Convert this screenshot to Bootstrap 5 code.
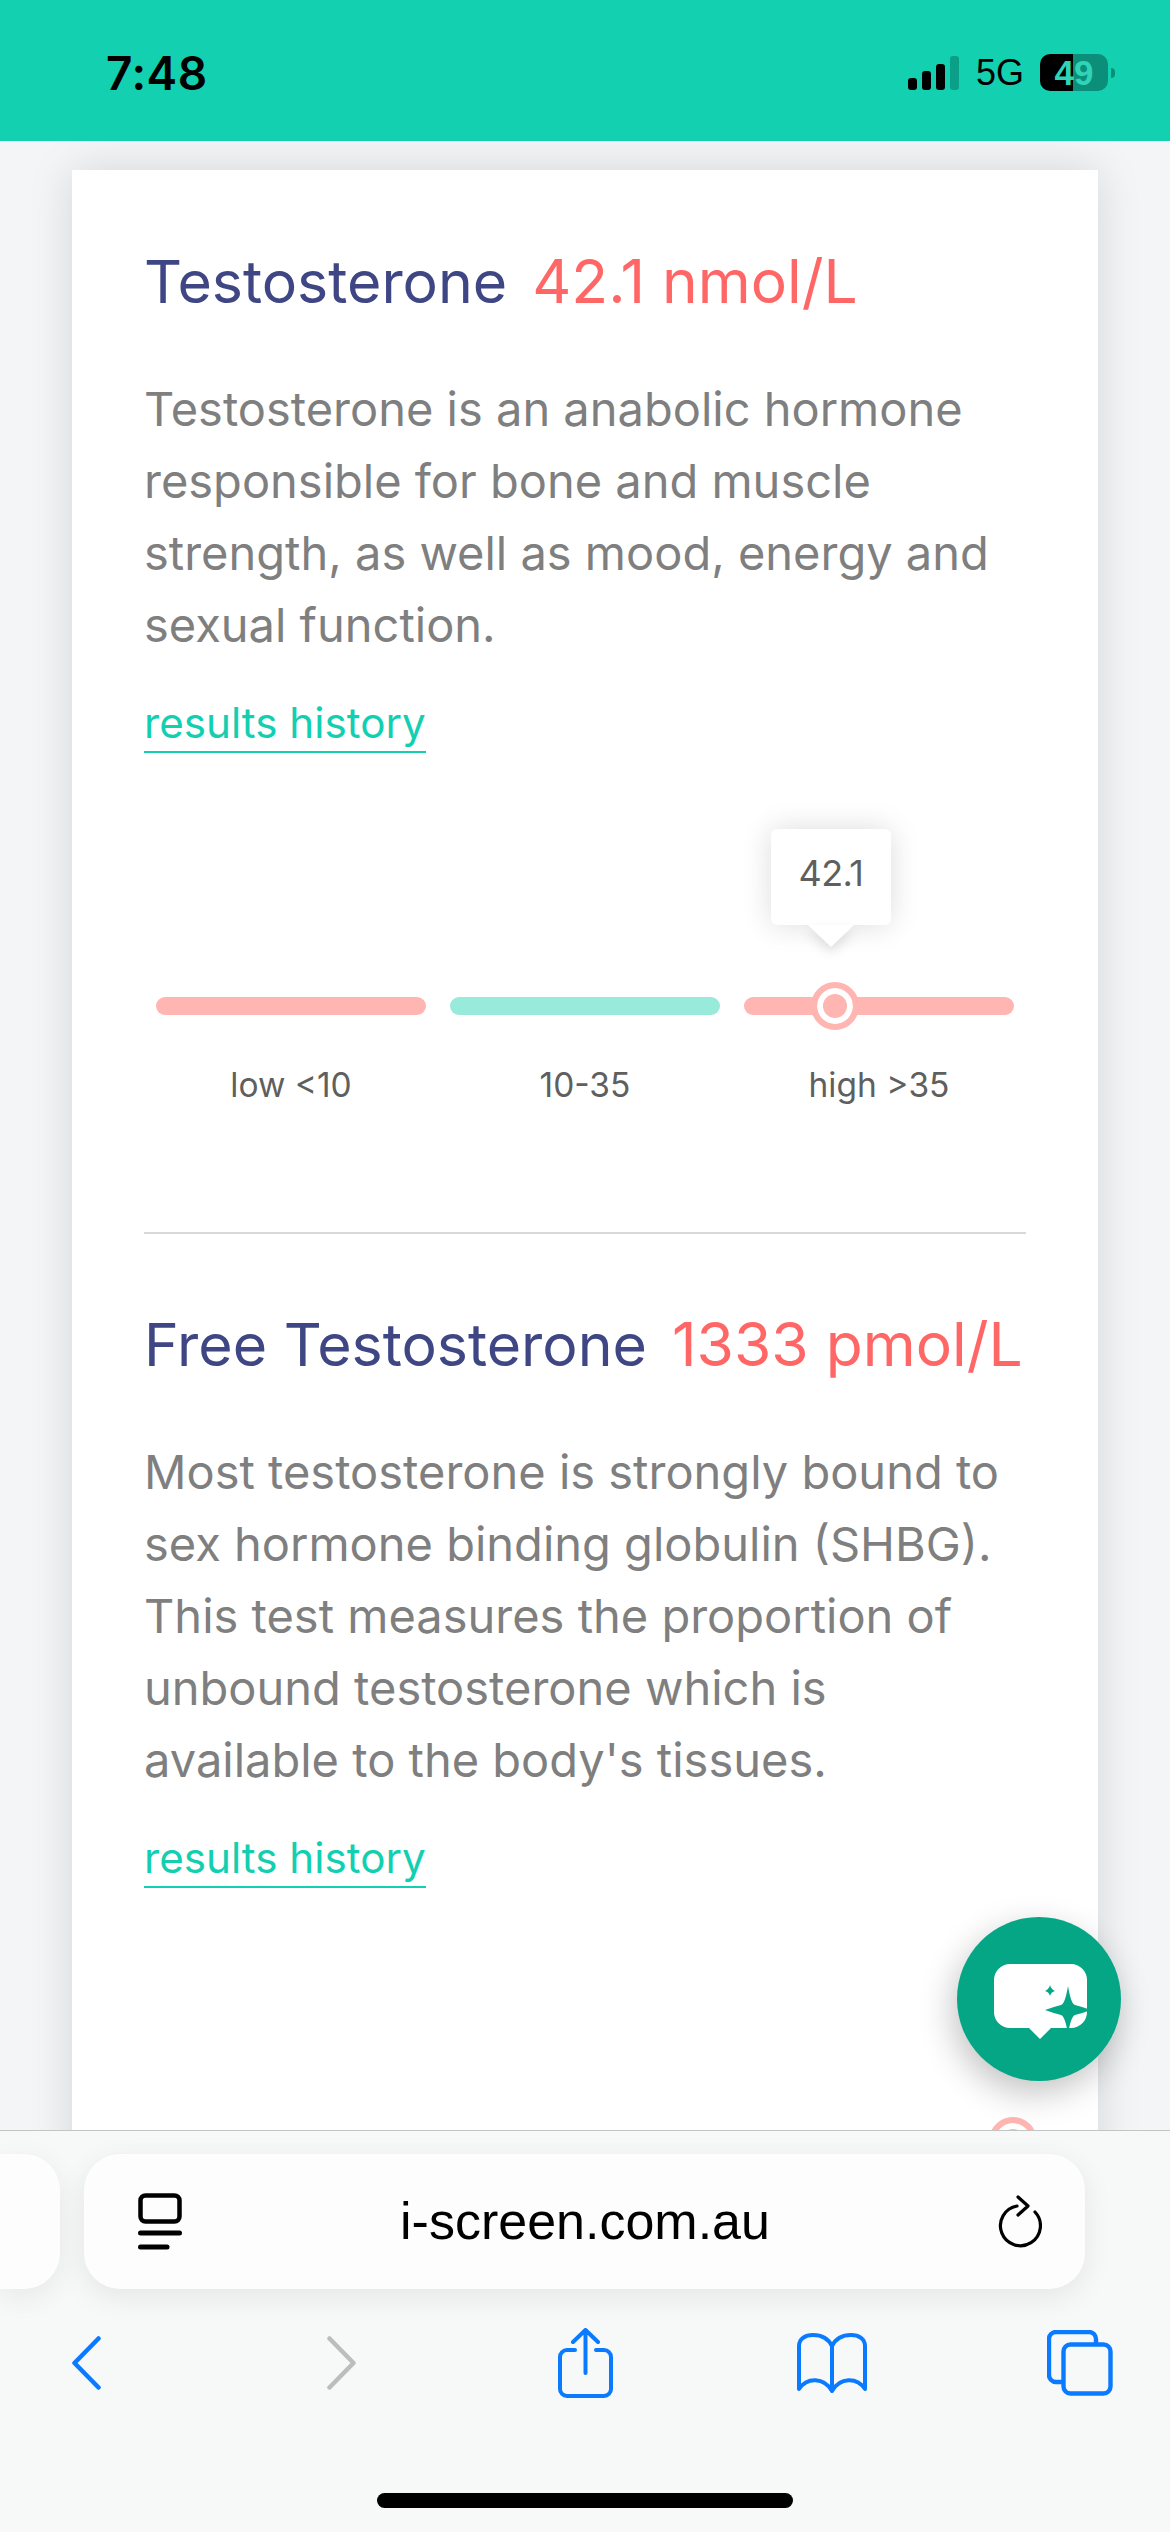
<!DOCTYPE html>
<html lang="en">
<head>
<meta charset="utf-8">
<title>i-screen results</title>
<link href="https://cdn.jsdelivr.net/npm/bootstrap@5.3.0/dist/css/bootstrap.min.css" rel="stylesheet">
<style>
html,body{height:2532px;overflow:hidden;background:#f3f5f7;font-family:Inter,"Liberation Sans",sans-serif}
.phone-page{width:1170px;height:2532px}
.status-top{height:141px;flex:none;background:#13d0b0;padding:4px 55px 0 106px;color:#000}
.clock-txt{font:600 46px/1 Inter,sans-serif;letter-spacing:.5px}
.net-txt{font:400 36px/1 "Liberation Sans",sans-serif;margin:0 16px 0 17px}
.batt-body{width:68px;height:37px;border-radius:10px;background:linear-gradient(to right,#000 48%,#0b8f7a 48%);color:#2fd3b7;font:700 35px/37px "Liberation Sans",sans-serif;text-align:center}
.batt-tip{width:4px;height:10px;background:#0b8f7a;border-radius:0 4px 4px 0;margin-left:3px}
.scroll-area{padding:29px 72px 0;min-height:0}
.result-card{border:0;border-radius:0;background:#fff;box-shadow:0 0 42px rgba(0,0,0,.13);padding:75px 72px 0 72px;min-height:2100px}
.res-title{line-height:72px;font-weight:400;margin:0 0 45px;white-space:nowrap}
.res-name{color:#3f4684;margin-right:25px;font-size:59px}
.res-val{color:#ff6767;font-size:60.5px}
.res-desc{font-size:47px;line-height:72px;color:#7f7f7f;margin:0}
.hist-link{display:inline-block;margin-top:33px;font-size:42.2px;line-height:57px;color:#13cfb1;text-decoration:none;border-bottom:2px solid #13cfb1}
.scale-row{margin-top:244px;padding:0 12px;gap:24px}
.scale-col{width:270px;position:relative}
.scale-bar{height:18px;border-radius:9px}
.bar-red{background:#ffb5b1}
.bar-green{background:#98eadb}
.scale-lbl{margin-top:45px;font-size:33.5px;line-height:50px;color:#5f5f5f;text-align:center}
.scale-dot{position:absolute;top:-15px;width:48px;height:48px;margin-left:-24px;border-radius:50%;background:#ffb5b1;border:6px solid #ffb5b1;box-shadow:inset 0 0 0 6px #fff}
.scale-tip{position:absolute;top:-168px;width:120px;height:96px;margin-left:-60px;background:#fff;border-radius:6px;box-shadow:0 0 30px rgba(0,0,0,.14);font-size:36px;line-height:88px;color:#5f5f5f;text-align:center;letter-spacing:-.5px}
.scale-tip::after{content:"";position:absolute;left:37px;top:96px;border:solid transparent;border-width:22px 23px 0;border-top-color:#fff;filter:drop-shadow(0 6px 6px rgba(0,0,0,.12))}
.sect-rule{margin:122px 0 74px;border:0;border-top:2px solid #d9d9d9;opacity:1}
.chat-fab{position:absolute;left:957px;top:1917px;width:164px;height:164px;border:0;padding:0;border-radius:50%;background:#05a685;box-shadow:-4px 12px 34px rgba(0,0,0,.24)}
.safari-bar{height:402px;flex:none;background:#f7f8f8;border-top:1px solid #c4c4c4;padding-top:23px;position:relative;z-index:2}
.tab-peek{width:60px;height:135px;background:#fdfdfd;border-radius:0 36px 36px 0;box-shadow:0 8px 30px rgba(0,0,0,.07)}
.url-pill{width:1001px;height:135px;margin-left:24px;background:#fdfdfd;border-radius:36px;padding:0 43px 0 54px;box-shadow:0 8px 30px rgba(0,0,0,.08)}
.url-txt{font:400 52px/1 "Liberation Sans",sans-serif;color:#000;margin:-1px 10px 0 0}
.tool-row{height:70px;margin-top:39px}
.tool-back{margin-left:72px}
.tool-fwd{margin-left:226px}
.tool-share{margin-left:202px}
.tool-book{margin-left:184px}
.tool-tabs{margin-left:180px}
.home-line{width:416px;height:15px;border-radius:8px;background:#000;margin:95px auto 0 377px}
</style>
</head>
<body>
<div class="phone-page d-flex flex-column position-relative">
  <header class="status-top d-flex align-items-center justify-content-between">
    <span class="clock-txt">7:48</span>
    <div class="d-flex align-items-center">
      <svg width="51" height="34" viewBox="0 0 51 34" aria-hidden="true">
        <rect x="0" y="22" width="9" height="12" rx="3"/>
        <rect x="14" y="15" width="9" height="19" rx="3"/>
        <rect x="28" y="8" width="9" height="26" rx="3"/>
        <rect x="42" y="0" width="9" height="34" rx="3" fill="#0b9f88"/>
      </svg>
      <span class="net-txt">5G</span>
      <span class="batt-body">49</span>
      <span class="batt-tip"></span>
    </div>
  </header>

  <main class="scroll-area flex-grow-1 overflow-hidden">
    <div class="card result-card">
      <h2 class="res-title"><span class="res-name">Testosterone</span><span class="res-val">42.1 nmol/L</span></h2>
      <p class="res-desc">Testosterone is an anabolic hormone responsible for bone and muscle strength, as well as mood, energy and sexual function.</p>
      <a href="#" class="hist-link align-self-start">results history</a>
      <div class="scale-row d-flex">
        <div class="scale-col"><div class="scale-bar bar-red"></div><div class="scale-lbl">low &lt;10</div></div>
        <div class="scale-col"><div class="scale-bar bar-green"></div><div class="scale-lbl">10-35</div></div>
        <div class="scale-col">
          <div class="scale-bar bar-red"></div>
          <div class="scale-tip" style="left:32.2%">42.1</div>
          <div class="scale-dot" style="left:33.7%"></div>
          <div class="scale-lbl">high &gt;35</div>
        </div>
      </div>
      <hr class="sect-rule">
      <h2 class="res-title"><span class="res-name">Free Testosterone</span><span class="res-val">1333 pmol/L</span></h2>
      <p class="res-desc">Most testosterone is strongly bound to sex hormone binding globulin (SHBG). This test measures the proportion of unbound testosterone which is available to the body's tissues.</p>
      <a href="#" class="hist-link align-self-start">results history</a>
      <div class="scale-row d-flex">
        <div class="scale-col"><div class="scale-bar bar-red"></div></div>
        <div class="scale-col"><div class="scale-bar bar-green"></div></div>
        <div class="scale-col">
          <div class="scale-bar bar-red"></div>
          <div class="scale-dot" style="left:99.8%"></div>
        </div>
      </div>
    </div>
  </main>

  <button class="chat-fab" type="button" aria-label="Chat">
    <svg width="164" height="164" viewBox="0 0 164 164" aria-hidden="true">
      <path fill="#fff" d="M53 47H114A16 16 0 0 1 130 63V95A16 16 0 0 1 114 111H94L83 122L72 111H53A16 16 0 0 1 37 95V63A16 16 0 0 1 53 47Z"/>
      <path fill="#05a685" d="M111 69Q114 87 118 88Q126 90 134 93Q126 96 118 98Q114 99 111 117Q108 99 104 98Q96 96 88 93Q96 90 104 88Q108 87 111 69Z"/>
      <path fill="#05a685" d="M93 68Q94 72 98 74Q94 75 93 79Q92 75 88 74Q92 72 93 68Z"/>
    </svg>
  </button>

  <footer class="safari-bar">
    <div class="d-flex">
      <div class="tab-peek"></div>
      <div class="url-pill d-flex align-items-center justify-content-between">
        <svg width="44" height="58" viewBox="0 0 44 58" fill="none" stroke="#000" stroke-width="4.5" stroke-linecap="round" aria-hidden="true">
          <rect x="2.5" y="2.5" width="39" height="26" rx="5"/>
          <path d="M2.5 40H41.5" stroke-width="5"/>
          <path d="M2.5 54H29" stroke-width="5"/>
        </svg>
        <span class="url-txt">i-screen.com.au</span>
        <svg width="44" height="54" viewBox="0 0 44 54" fill="none" stroke="#000" stroke-width="3.2" stroke-linecap="round" stroke-linejoin="round" aria-hidden="true">
          <path d="M19 11A20 20 0 1 0 37 17"/>
          <path d="M20 2L30 11L20 20"/>
        </svg>
      </div>
    </div>
    <div class="tool-row d-flex align-items-center">
      <svg class="tool-back" width="29" height="54" viewBox="0 0 29 54" fill="none" stroke="#0a7aff" stroke-width="4.5" stroke-linecap="round" stroke-linejoin="round" aria-hidden="true"><path d="M26.5 2.5L2.5 27L26.5 51.5"/></svg>
      <svg class="tool-fwd" width="29" height="54" viewBox="0 0 29 54" fill="none" stroke="#bdbdbd" stroke-width="4.5" stroke-linecap="round" stroke-linejoin="round" aria-hidden="true"><path d="M2.5 2.5L26.5 27L2.5 51.5"/></svg>
      <svg class="tool-share" width="55" height="70" viewBox="0 0 55 70" fill="none" stroke="#0a7aff" stroke-width="4" stroke-linecap="round" stroke-linejoin="round" aria-hidden="true">
        <path d="M17 22H9A7 7 0 0 0 2 29V61A7 7 0 0 0 9 68H46A7 7 0 0 0 53 61V29A7 7 0 0 0 46 22H38"/>
        <path d="M27.5 45V2M15 14L27.5 2L40 14"/>
      </svg>
      <svg class="tool-book" width="70" height="60" viewBox="0 0 70 60" fill="none" stroke="#0a7aff" stroke-width="4" stroke-linecap="round" stroke-linejoin="round" aria-hidden="true">
        <path d="M35 13C31 5 24 2 16 2C8 2 2 6 2 13V56C10 44 27 44 35 58C43 44 60 44 68 56V13C68 6 62 2 54 2C46 2 39 5 35 13V58"/>
      </svg>
      <svg class="tool-tabs" width="66" height="66" viewBox="0 0 66 66" fill="none" stroke="#0a7aff" stroke-width="4.4" stroke-linejoin="round" aria-hidden="true">
        <path d="M16 52H9A7 7 0 0 1 2 45V9A7 7 0 0 1 9 2H42A7 7 0 0 1 49 9V14"/>
        <rect x="16.5" y="14.5" width="47" height="49" rx="7"/>
      </svg>
    </div>
    <div class="home-line"></div>
  </footer>
</div>
<script src="https://cdn.jsdelivr.net/npm/bootstrap@5.3.0/dist/js/bootstrap.bundle.min.js"></script>
</body>
</html>
